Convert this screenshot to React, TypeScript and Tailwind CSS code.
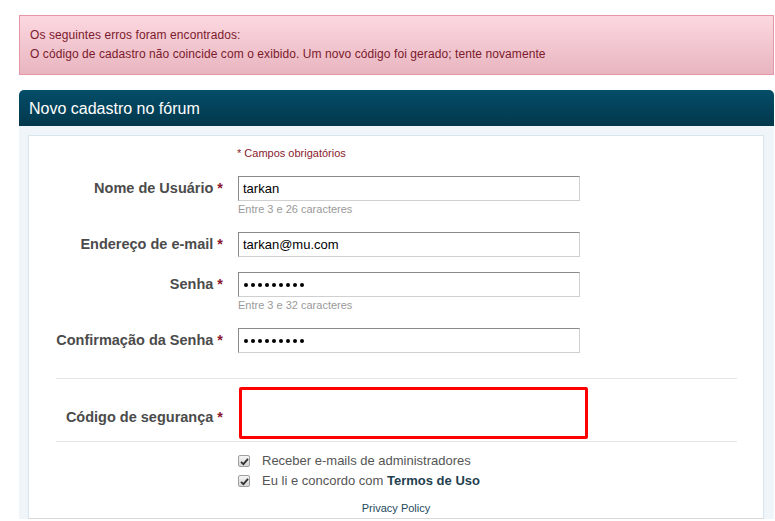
import React from "react";

const font = { fontFamily: '"Liberation Sans", Arial, sans-serif' };

function Req() {
  return <span className="ml-[4px] text-[#8a1a2e]">*</span>;
}

function Row({
  label,
  children,
  hint,
  className = "",
}: {
  label: string;
  children: React.ReactNode;
  hint?: string;
  className?: string;
}) {
  return (
    <div className={`flex ${className}`}>
      <div className="w-[194px] h-[25px] shrink-0 flex items-center justify-end text-[14.5px] font-bold text-[#4b4b4b]">
        {label}
        <Req />
      </div>
      <div className="ml-[15px] flex flex-col">
        {children}
        {hint && <div className="h-[16px] leading-[16px] text-[11px] text-[#9a9a9a]">{hint}</div>}
      </div>
    </div>
  );
}

const box =
  "w-[342px] h-[25px] px-[4px] text-[13px] text-black bg-white border border-[#d0d0d0] border-t-[#8a8a8a] border-l-[#8a8a8a] outline-none";

function Field({ value }: { value: string }) {
  return <input readOnly type="text" value={value} className={box} style={font} />;
}

function Password({ length }: { length: number }) {
  return (
    <div className={`${box} flex items-center gap-[3px] pl-[5px]`}>
      {Array.from({ length }).map((_, i) => (
        <span key={i} className="w-[4px] h-[4px] rounded-full bg-black" />
      ))}
    </div>
  );
}

function Check({ children }: { children: React.ReactNode }) {
  return (
    <div className="flex items-center h-[20px]">
      <span className="w-[12px] h-[12px] ml-[1px] rounded-[2px] border border-[#a0a0a0] bg-gradient-to-b from-[#f4f4f4] to-[#d6d6d6] flex items-center justify-center">
        <svg width="9" height="9" viewBox="0 0 9 9">
          <path d="M1 4.8 L3.4 7.2 L8 1.8" fill="none" stroke="#333" strokeWidth="1.8" />
        </svg>
      </span>
      <span className="ml-[12px] text-[13px] text-[#555]">{children}</span>
    </div>
  );
}

export default function App() {
  return (
    <div className="min-h-[521px] bg-white pl-[19px] pr-[1px] pt-[15px]" style={font}>
      <div className="h-[60px] border border-[#e597a7] bg-gradient-to-b from-[#fcd8e0] to-[#e8b5c0] px-[10px] pt-[10px] text-[12px] tracking-[0.08px] leading-[19px] text-[#7b1a2c]">
        <div>Os seguintes erros foram encontrados:</div>
        <div>O código de cadastro não coincide com o exibido. Um novo código foi gerado; tente novamente</div>
      </div>

      <div className="mt-[15px]">
        <div className="h-[36px] rounded-t-[5px] bg-gradient-to-b from-[#054d68] to-[#02384c] flex items-center px-[10px] pt-[1px] text-[16px] text-white">
          Novo cadastro no fórum
        </div>
        <div className="bg-[#eff5f9] pt-[9px] pl-[9px] pr-[10px]">
          <div className="bg-white border border-[#d6e6ec] border-b-[#d9d9d9] pb-[2px]">
            <div className="pt-[9px] pl-[208px] h-[25px] leading-[16px] text-[11px] text-[#8a1a2e]">
              * Campos obrigatórios
            </div>
            <Row label="Nome de Usuário" hint="Entre 3 e 26 caracteres" className="mt-[15px]">
              <Field value="tarkan" />
            </Row>
            <Row label="Endereço de e-mail" className="mt-[15px]">
              <Field value="tarkan@mu.com" />
            </Row>
            <Row label="Senha" hint="Entre 3 e 32 caracteres" className="mt-[15px]">
              <Password length={9} />
            </Row>
            <Row label="Confirmação da Senha" className="mt-[15px]">
              <Password length={9} />
            </Row>

            <div className="mt-[25px] ml-[27px] mr-[26px] border-t border-[#e6e6e6]" />

            <div className="flex mt-[8px]">
              <div className="w-[194px] h-[52px] shrink-0 flex items-center justify-end pt-[9px] text-[14.5px] font-bold text-[#4b4b4b]">
                Código de segurança
                <Req />
              </div>
              <div className="ml-[16px] w-[349px] h-[52px] border-[3px] border-[#ff0000] rounded-[2px]" />
            </div>

            <div className="mt-[2px] ml-[27px] mr-[26px] border-t border-[#e6e6e6]" />

            <div className="mt-[9px] pl-[208px]">
              <Check>Receber e-mails de administradores</Check>
              <Check>
                Eu li e concordo com <b className="text-[#1f3f4f]">Termos de Uso</b>
              </Check>
            </div>

            <div className="mt-[9px] h-[16px] leading-[16px] text-center text-[11px] text-[#1e4a5c]">
              Privacy Policy
            </div>
          </div>
        </div>
      </div>
    </div>
  );
}
